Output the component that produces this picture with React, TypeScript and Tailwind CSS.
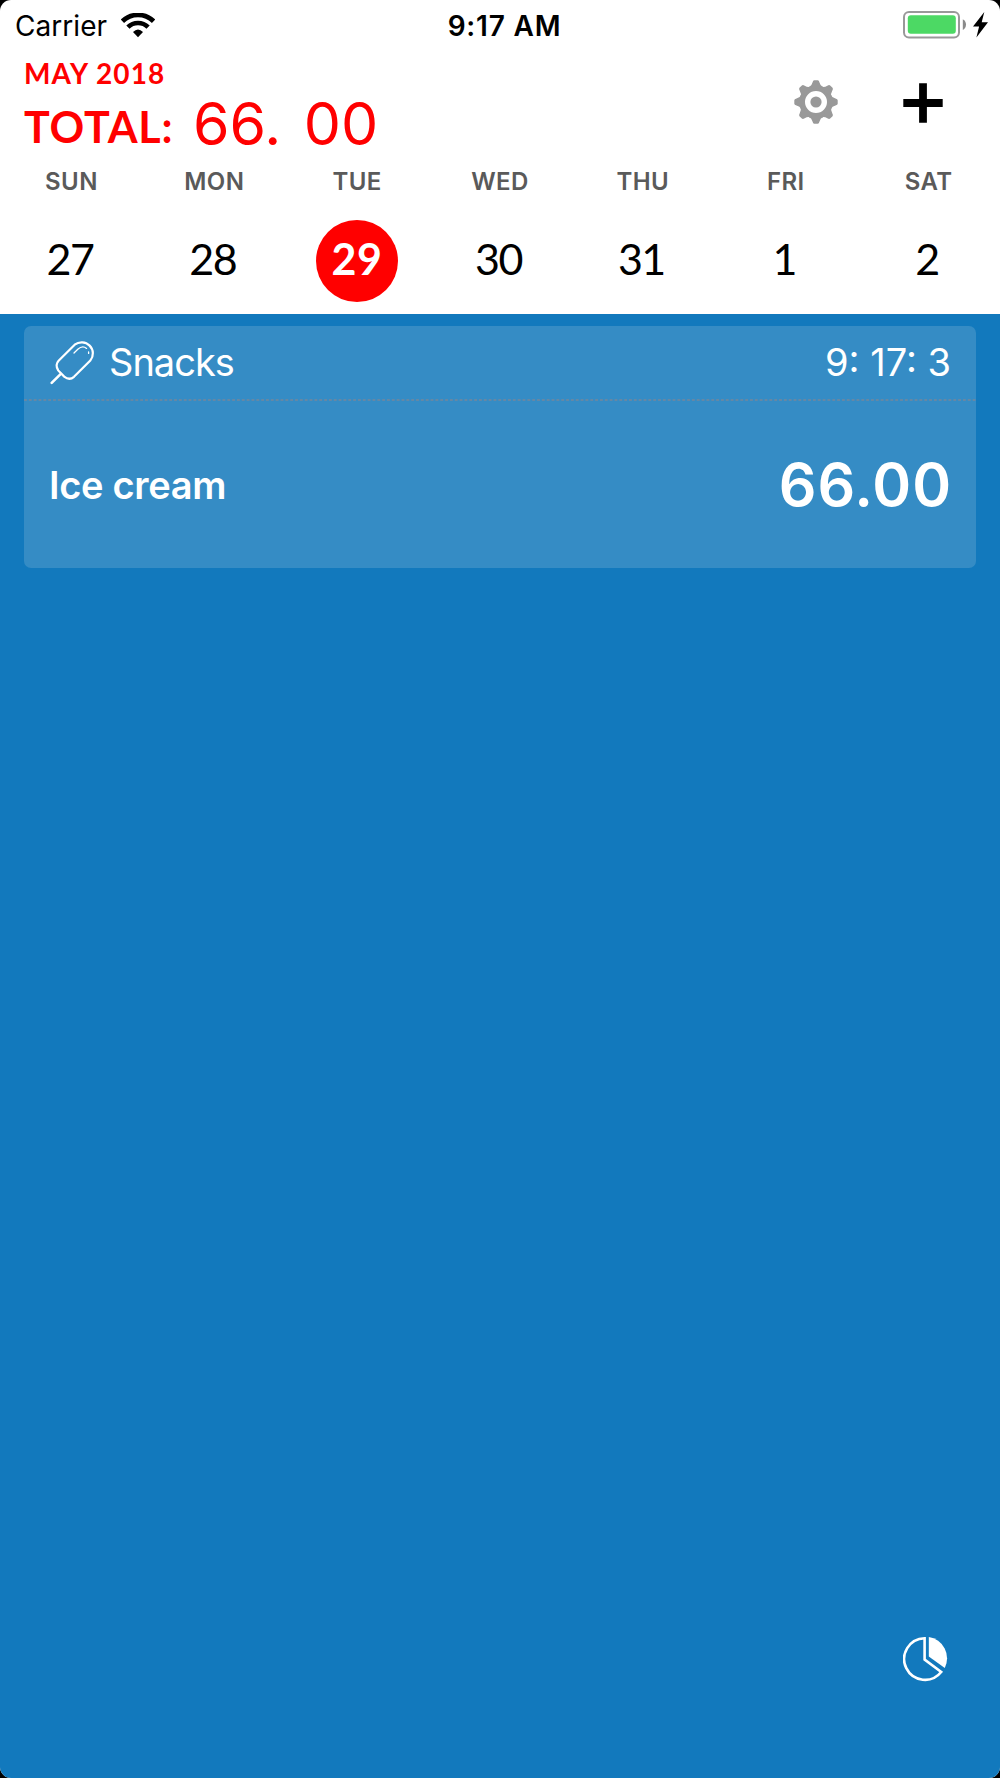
const DAYS = [
  { name: "SUN", date: "27" },
  { name: "MON", date: "28" },
  { name: "TUE", date: "29" },
  { name: "WED", date: "30" },
  { name: "THU", date: "31" },
  { name: "FRI", date: "1" },
  { name: "SAT", date: "2" },
];

const SELECTED = "29";

const GEAR_ANGLES = [0, 45, 90, 135, 180, 225, 270, 315];

function WifiIcon() {
  return (
    <svg width="34" height="25" viewBox="0 0 34 25" className="shrink-0">
      <path d="M1.4 8.3A22.4 22.4 0 0 1 32.6 8.3" fill="none" stroke="#000" strokeWidth="4.8" />
      <path d="M6.9 14.2A14.4 14.4 0 0 1 27.1 14.2" fill="none" stroke="#000" strokeWidth="4.6" />
      <path d="M17 24.2L12 19Q17 13.9 22 19Z" />
    </svg>
  );
}

function BatteryIcon() {
  return (
    <svg width="86" height="28" viewBox="0 0 86 28">
      <rect x="1" y="1" width="55" height="25.4" rx="5" fill="none" stroke="#999" strokeWidth="2" />
      <rect x="4.8" y="4.3" width="48" height="18.4" rx="3" fill="#4cd964" />
      <path d="M59.8 8.2Q63 10 63 13.5T59.8 19Z" fill="#8a8a8a" />
      <path d="M81.3 1L70 15.6H76.1L73.4 26.6L85 11.3H78.7Z" />
    </svg>
  );
}

function GearIcon() {
  return (
    <svg width="44" height="44" viewBox="-22 -22 44 44">
      <circle r="13.8" fill="none" stroke="#999" strokeWidth="5.6" />
      <circle r="5.6" fill="#999" />
      {GEAR_ANGLES.map((angle) => (
        <path
          key={angle}
          transform={`rotate(${angle})`}
          d="M-6.8 -15Q-4.4 -16 -3.5 -19.5Q-3 -21.7 -1.7 -21.7H1.7Q3 -21.7 3.5 -19.5Q4.4 -16 6.8 -15L0 -13Z"
          fill="#999"
        />
      ))}
    </svg>
  );
}

function PlusIcon() {
  return (
    <svg width="40" height="40" viewBox="0 0 40 40">
      <path d="M20 0.3V39.7M0.3 20H39.7" stroke="#000" strokeWidth="7.8" />
    </svg>
  );
}

function IceCreamIcon() {
  return (
    <svg width="46" height="45" viewBox="0 0 46 45" fill="none" stroke="#fff" strokeLinecap="round">
      <path
        d="M24.7 4.7L8.6 20.8Q4.8 25 8.2 30.4L14.2 36.6Q19.4 40.8 24 36.8L40.3 20.6A11.2 11.2 0 0 0 24.7 4.7Z"
        strokeWidth="2.2"
      />
      <path d="M10.8 33.8L1.7 42.8" strokeWidth="2.6" />
      <path d="M24 13L27.8 9.2Q32.5 5 36.6 8.4M38.6 12V13.4" strokeWidth="1.3" />
    </svg>
  );
}

function PieIcon() {
  return (
    <svg width="46" height="46" viewBox="0 0 46 46">
      <path d="M21.6 2.2A20.8 20.8 0 1 0 38.2 36L21.6 23.6Z" fill="none" stroke="#fff" strokeWidth="2.6" />
      <path d="M25.8 1A21.6 21.6 0 0 1 41.8 32L25.8 20.6Z" fill="#fff" />
    </svg>
  );
}

function StatusBar() {
  return (
    <div className="flex h-[50px] items-center justify-between pl-[15px] pr-[11px]">
      <div className="flex w-[300px] items-center gap-[14px]">
        <span className="pt-px text-[28px] tracking-[0.05px]">Carrier</span>
        <WifiIcon />
      </div>
      <span className="pl-[5px] pt-px text-[28px] font-semibold tracking-[0.8px]">9:17 AM</span>
      <div className="flex w-[300px] justify-end">
        <BatteryIcon />
      </div>
    </div>
  );
}

function Header() {
  return (
    <header className="flex h-[108px] justify-between pl-[24px] pr-[57px]">
      <div className="text-[#ff0000]">
        <div className="h-[46px] font-['Lato'] text-[28px] font-bold leading-[46px] tracking-[1.1px]">MAY 2018</div>
        <div className="flex h-[55px] whitespace-pre leading-[55px]">
          <span className="mt-[3px] w-[169px] font-['Lato'] text-[43px] font-bold tracking-[0.8px]">TOTAL:</span>
          <span className="text-[59px] font-normal tracking-[0px] [word-spacing:6px]">66. 00</span>
        </div>
      </div>
      <div className="flex gap-[65px]">
        <button className="mt-[30px] h-[44px]">
          <GearIcon />
        </button>
        <button className="mt-[33px] h-[40px]">
          <PlusIcon />
        </button>
      </div>
    </header>
  );
}

function WeekStrip() {
  return (
    <div className="grid h-[156px] grid-cols-7 text-center">
      {DAYS.map((day) => (
        <div key={day.name} className="flex flex-col items-center">
          <span className="h-[47px] text-[24px] font-semibold leading-[48px] tracking-[0.4px] text-[#5a5a5a]">{day.name}</span>
          <span
            className={`mt-[15px] h-[82px] w-[82px] rounded-full font-['Lato'] text-[43px] leading-[78px] ${
              day.date === SELECTED
                ? "bg-[#ff0000] font-bold tracking-[0.8px] text-white"
                : "pr-[3px] tracking-[-1.5px] text-black"
            }`}
          >
            {day.date}
          </span>
        </div>
      ))}
    </div>
  );
}

function ExpenseCard() {
  return (
    <section className="mx-[24px] mt-[12px] h-[242px] rounded-[7px] bg-[#358cc5]">
      <div className="flex h-[73px] items-center justify-between pl-[26px] pr-[25px] text-[38px]">
        <div className="flex items-center gap-[13px]">
          <IceCreamIcon />
          <span className="tracking-[-1px]">Snacks</span>
        </div>
        <span>9: 17: 3</span>
      </div>
      <svg width="952" height="2" className="block">
        <path d="M0 1H952" stroke="#6488a6" strokeWidth="2" strokeDasharray="2.9 1.94" />
      </svg>
      <div className="flex h-[169px] items-center justify-between pl-[25px] pr-[24px]">
        <span className="text-[38px] font-semibold tracking-[-0.3px]">Ice cream</span>
        <span className="text-[59px] font-semibold tracking-[0.9px]">66.00</span>
      </div>
    </section>
  );
}

export default function App() {
  return (
    <div className="bg-black">
      <div className="flex h-[1778px] w-[1000px] flex-col overflow-hidden rounded-[11px] bg-white font-['Inter',sans-serif] text-black">
        <StatusBar />
        <Header />
        <WeekStrip />
        <main className="flex flex-1 flex-col justify-between bg-[#1279bd] text-white">
          <ExpenseCard />
          <button className="mb-[96px] mr-[51px] h-[46px] self-end">
            <PieIcon />
          </button>
        </main>
      </div>
    </div>
  );
}
